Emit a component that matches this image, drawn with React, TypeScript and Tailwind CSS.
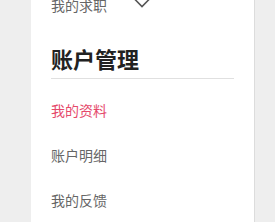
import React from "react";

const font = { fontFamily: '"Noto Sans CJK SC", "Noto Sans", sans-serif' };

export default function App() {
  return (
    <div className="h-[222px] w-[275px] overflow-hidden bg-[#eeeeee]" style={font}>
      <div className="ml-[31px] w-[224px] h-full flex flex-col overflow-hidden bg-white border-r border-[#dcdcdc] px-[20px]">
        <div className="-mt-[18px] h-[45px] shrink-0 flex items-center text-[14px] text-[#666666]">
          <span className="leading-none">我的求职</span>
          <svg className="ml-[27px]" width="16" height="16" viewBox="0 0 16 16" fill="none">
            <path d="M1 2.5 L8 9.5 L15 2.5" stroke="#555555" strokeWidth="1.6" />
          </svg>
        </div>
        <div className="pt-[16px] pb-[5px] shrink-0 border-b border-[#e0e0e0]">
          <div className="text-[22px] leading-[30px] font-bold text-[#222222]">账户管理</div>
        </div>
        <div className="mt-[9px] shrink-0">
          <div className="h-[45px] flex items-center text-[14px] text-[#e5496b]">我的资料</div>
          <div className="h-[45px] flex items-center text-[14px] text-[#666666]">账户明细</div>
          <div className="h-[45px] flex items-center text-[14px] text-[#666666]">我的反馈</div>
        </div>
      </div>
    </div>
  );
}
